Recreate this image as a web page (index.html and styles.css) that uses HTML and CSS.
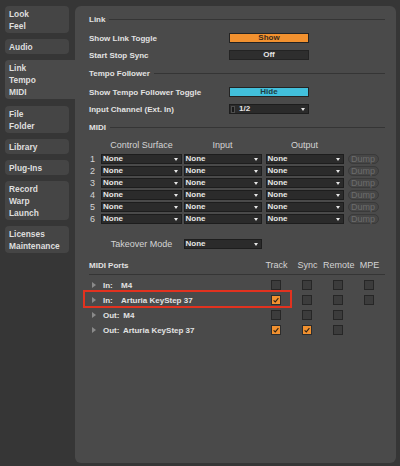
FILE: index.html
```html
<!DOCTYPE html>
<html>
<head>
<meta charset="utf-8">
<link rel="stylesheet" href="styles.css">
</head>
<body>
<div class="app">
  <nav class="sidebar">
    <div class="tab">Look<br>Feel</div>
    <div class="tab">Audio</div>
    <div class="tab active">Link<br>Tempo<br>MIDI</div>
    <div class="tab">File<br>Folder</div>
    <div class="tab">Library</div>
    <div class="tab">Plug-Ins</div>
    <div class="tab">Record<br>Warp<br>Launch</div>
    <div class="tab">Licenses<br>Maintenance</div>
  </nav>
  <main class="panel">
    <div class="section-head"><span>Link</span><i class="rule"></i></div>
    <div class="setting s-first"><span class="label">Show Link Toggle</span><div class="toggle orange">Show</div></div>
    <div class="setting s-next"><span class="label">Start Stop Sync</span><div class="toggle dark">Off</div></div>

    <div class="section-head h-next"><span>Tempo Follower</span><i class="rule"></i></div>
    <div class="setting s-first"><span class="label">Show Tempo Follower Toggle</span><div class="toggle cyan">Hide</div></div>
    <div class="setting s-next"><span class="label">Input Channel (Ext. In)</span>
      <div class="select wide"><span class="chan-mark"></span><span class="sel-text">1/2</span><i class="arrow"></i></div>
    </div>

    <div class="section-head h-next"><span>MIDI</span><i class="rule"></i></div>
    <div class="midi-row midi-head">
      <span></span>
      <span class="col-title w81">Control Surface</span>
      <span class="col-title w78">Input</span>
      <span class="col-title w78">Output</span>
      <span></span>
    </div>
    <div class="midi-rows">
      <div class="midi-row"><span class="num">1</span><div class="select w81"><span class="sel-text">None</span><i class="arrow"></i></div><div class="select w78"><span class="sel-text">None</span><i class="arrow"></i></div><div class="select w78"><span class="sel-text">None</span><i class="arrow"></i></div><div class="dump">Dump</div></div>
      <div class="midi-row"><span class="num">2</span><div class="select w81"><span class="sel-text">None</span><i class="arrow"></i></div><div class="select w78"><span class="sel-text">None</span><i class="arrow"></i></div><div class="select w78"><span class="sel-text">None</span><i class="arrow"></i></div><div class="dump">Dump</div></div>
      <div class="midi-row"><span class="num">3</span><div class="select w81"><span class="sel-text">None</span><i class="arrow"></i></div><div class="select w78"><span class="sel-text">None</span><i class="arrow"></i></div><div class="select w78"><span class="sel-text">None</span><i class="arrow"></i></div><div class="dump">Dump</div></div>
      <div class="midi-row"><span class="num">4</span><div class="select w81"><span class="sel-text">None</span><i class="arrow"></i></div><div class="select w78"><span class="sel-text">None</span><i class="arrow"></i></div><div class="select w78"><span class="sel-text">None</span><i class="arrow"></i></div><div class="dump">Dump</div></div>
      <div class="midi-row"><span class="num">5</span><div class="select w81"><span class="sel-text">None</span><i class="arrow"></i></div><div class="select w78"><span class="sel-text">None</span><i class="arrow"></i></div><div class="select w78"><span class="sel-text">None</span><i class="arrow"></i></div><div class="dump">Dump</div></div>
      <div class="midi-row"><span class="num">6</span><div class="select w81"><span class="sel-text">None</span><i class="arrow"></i></div><div class="select w78"><span class="sel-text">None</span><i class="arrow"></i></div><div class="select w78"><span class="sel-text">None</span><i class="arrow"></i></div><div class="dump">Dump</div></div>
    </div>
    <div class="midi-row takeover">
      <span></span>
      <span class="col-title w81">Takeover Mode</span>
      <div class="select w78"><span class="sel-text">None</span><i class="arrow"></i></div>
    </div>

    <div class="ports-row ports-head">
      <span class="ports-title">MIDI Ports</span>
      <span class="col-title">Track</span>
      <span class="col-title">Sync</span>
      <span class="col-title">Remote</span>
      <span class="col-title">MPE</span>
    </div>
    <div class="ports-rule"></div>
    <div class="ports-list">
      <div class="ports-row">
        <span class="port-name"><i class="tri"></i><span class="dir">In:</span>M4</span>
        <span class="cell"><i class="cb"></i></span>
        <span class="cell"><i class="cb"></i></span>
        <span class="cell"><i class="cb"></i></span>
        <span class="cell"><i class="cb"></i></span>
      </div>
      <div class="ports-row">
        <span class="port-name"><i class="tri"></i><span class="dir">In:</span>Arturia KeyStep 37</span>
        <span class="cell"><i class="cb on"><svg viewBox="0 0 10 10" width="10" height="10"><path d="M2.6 5.3 L4.3 6.9 L7.4 3.2" fill="none" stroke="#2b2116" stroke-width="1.1"/></svg></i></span>
        <span class="cell"><i class="cb"></i></span>
        <span class="cell"><i class="cb"></i></span>
        <span class="cell"><i class="cb"></i></span>
        <span class="highlight"></span>
      </div>
      <div class="ports-row">
        <span class="port-name"><i class="tri"></i><span class="dir">Out:</span> M4</span>
        <span class="cell"><i class="cb"></i></span>
        <span class="cell"><i class="cb"></i></span>
        <span class="cell"><i class="cb"></i></span>
        <span class="cell"></span>
      </div>
      <div class="ports-row">
        <span class="port-name"><i class="tri"></i><span class="dir">Out:</span> Arturia KeyStep 37</span>
        <span class="cell"><i class="cb on"><svg viewBox="0 0 10 10" width="10" height="10"><path d="M2.6 5.3 L4.3 6.9 L7.4 3.2" fill="none" stroke="#2b2116" stroke-width="1.1"/></svg></i></span>
        <span class="cell"><i class="cb on"><svg viewBox="0 0 10 10" width="10" height="10"><path d="M2.6 5.3 L4.3 6.9 L7.4 3.2" fill="none" stroke="#2b2116" stroke-width="1.1"/></svg></i></span>
        <span class="cell"><i class="cb"></i></span>
        <span class="cell"></span>
      </div>
    </div>
  </main>
</div>
</body>
</html>
```

FILE: styles.css
```css
* { box-sizing: border-box; margin: 0; padding: 0; }

html, body {
  width: 400px;
  height: 466px;
  overflow: hidden;
}

body {
  background: #363636;
  font-family: "Liberation Sans", Arial, sans-serif;
  font-size: 8px;
  font-weight: bold;
  color: #e2e2e2;
}

.app {
  display: flex;
  height: 466px;
}

/* Sidebar */
.sidebar {
  width: 75px;
  flex: none;
  padding: 6px 0 0 5px;
  display: flex;
  flex-direction: column;
  gap: 6.2px;
}

.tab {
  width: 64px;
  background: #454545;
  border-radius: 4px;
  padding: 2px 4px 1px 4px;
  line-height: 12px;
  font-size: 8.4px;
  color: #dedede;
}

.tab.active {
  width: 70px;
  background: #4a4a4a;
  border-radius: 4px 0 0 4px;
}

/* Main panel */
.panel {
  flex: 1;
  margin: 6px 4px 3px 0;
  background: #4a4a4a;
  border-radius: 6px;
  padding: 7px 11px 0 14px;
}

.section-head {
  display: flex;
  align-items: center;
  height: 12px;
  gap: 4px;
}

.section-head.h-next { margin-top: 6px; }

.rule {
  flex: 1;
  height: 1px;
  background: #353535;
}

.setting {
  display: flex;
  align-items: center;
  height: 12px;
}

.setting.s-first { margin-top: 7px; }
.setting.s-next { margin-top: 5px; }

.setting .label { width: 140px; }

.toggle {
  width: 80px;
  height: 10px;
  border: 1px solid #232323;
  line-height: 8px;
  text-align: center;
}

.toggle.orange { background: #f2912f; color: #3a2a1a; }
.toggle.dark { background: #2e2e2e; color: #e6e6e6; }
.toggle.cyan { background: #42c0dc; color: #1f3c44; }

/* Selects */
.select {
  height: 10px;
  background: #2b2b2b;
  border: 1px solid #1d1d1d;
  display: flex;
  align-items: center;
  padding: 0 3px 0 1px;
  line-height: 8px;
  color: #e6e6e6;
}

.select.wide { width: 80px; }
.select.w81 { width: 81px; }
.select.w78 { width: 78px; }

.sel-text { flex: 1; }

.arrow {
  width: 0;
  height: 0;
  border-left: 2.5px solid transparent;
  border-right: 2.5px solid transparent;
  border-top: 3px solid #e6e6e6;
}

.chan-mark {
  width: 4px;
  height: 7px;
  background: #1a1a1a;
  border: 1px solid #4e4e4e;
  margin: 0 4px 0 0;
}

/* MIDI grid */
.midi-row {
  display: grid;
  grid-template-columns: 12px 82.5px 82px 82px 31px;
  align-items: center;
  height: 12px;
}

.midi-head { margin-top: 6px; }
.midi-rows { margin-top: 2px; }

.col-title {
  font-weight: normal;
  font-size: 9px;
  color: #d4d4d4;
  text-align: center;
}

.col-title.w81 { width: 81px; }
.col-title.w78 { width: 78px; }

.num {
  font-weight: normal;
  font-size: 9px;
  color: #d4d4d4;
  padding-left: 1px;
}

.dump {
  width: 31px;
  height: 10px;
  border-radius: 5px;
  background: #464646;
  border: 1px solid #3a3a3a;
  color: #6c6c6c;
  font-weight: normal;
  font-size: 9px;
  line-height: 8px;
  text-align: center;
}

.takeover { margin-top: 13px; }

/* MIDI Ports */
.ports-row {
  position: relative;
  display: grid;
  grid-template-columns: 1fr 31px 31px 31px 31px;
  align-items: center;
  height: 15px;
}

.ports-head {
  height: 12px;
  margin-top: 9px;
}

.ports-rule {
  height: 1px;
  background: #353535;
  margin-top: 2.5px;
}

.ports-list { margin-top: 3px; }

.port-name {
  display: flex;
  align-items: center;
  white-space: pre;
}

.tri {
  width: 0;
  height: 0;
  border-left: 4px solid #8a8a8a;
  border-top: 3px solid transparent;
  border-bottom: 3px solid transparent;
  margin: 0 7px 0 3px;
}

.dir {
  display: inline-block;
  min-width: 18px;
}

.cell {
  display: flex;
  justify-content: center;
  align-items: center;
}

.cb {
  display: block;
  width: 10px;
  height: 10px;
  background: #3c3c3c;
  border: 1px solid #262626;
  margin-right: 1px;
}

.cb.on {
  background: #f2912f;
  border-color: #2c2c2c;
}

.cb svg {
  display: block;
  margin: -1px 0 0 -1px;
}

.highlight {
  position: absolute;
  left: -6px;
  right: 93px;
  top: -2.5px;
  bottom: -0.5px;
  border: 2px solid #e2321f;
  pointer-events: none;
}
```
